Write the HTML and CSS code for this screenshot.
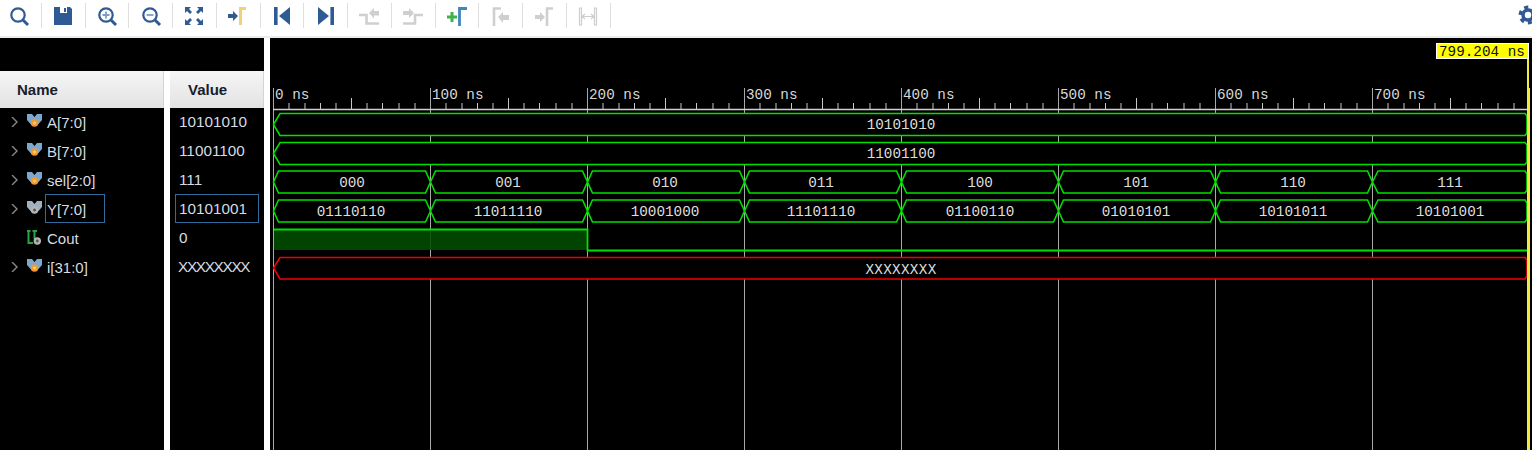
FILE: index.html
```html
<!DOCTYPE html>
<html lang="en">
<head>
<meta charset="utf-8">
<title>Waveform</title>
<link rel="stylesheet" href="styles.css">
</head>
<body>
<div class="app">
  <div class="toolbar">
    <div class="tool"><svg viewBox="0 0 24 24"><circle class="s-blue" cx="11" cy="11" r="6.700"/><path class="s-blue thick" d="M16 16l5 5"/></svg></div>
    <div class="tool"><svg viewBox="0 0 24 24"><path class="f-blue" d="M3 3h16l2 2v16H3z"/><path class="f-white" d="M9 3h7v6H9z"/><path class="f-blue" d="M13 4h2v4h-2z"/></svg></div>
    <div class="tool"><svg viewBox="0 0 24 24"><circle class="s-blue" cx="11" cy="11" r="6.700"/><path class="s-blue thick" d="M16 16l5 5"/><path class="s-light" d="M7.500 11h7M11 7.500v7"/></svg></div>
    <div class="tool"><svg viewBox="0 0 24 24"><circle class="s-blue" cx="11" cy="11" r="6.700"/><path class="s-blue thick" d="M16 16l5 5"/><path class="s-light" d="M7.500 11h7"/></svg></div>
    <div class="tool"><svg viewBox="0 0 24 24"><path class="f-blue" d="M3 3h6l-2 2 3 3-2 2-3-3-2 2zM21 3v6l-2-2-3 3-2-2 3-3-2-2zM3 21v-6l2 2 3-3 2 2-3 3 2 2zM21 21h-6l2-2-3-3 2-2 3 3 2-2z"/></svg></div>
    <div class="tool"><svg viewBox="0 0 24 24"><path class="s-yellow" d="M14.500 21V4.500H20"/><path class="f-blue" d="M2 10h5V7l5 5-5 5v-3H2z"/></svg></div>
    <div class="tool"><svg viewBox="0 0 24 24"><path class="f-blue" d="M4 3h3.600v18H4zM20 3v18L9 12z"/></svg></div>
    <div class="tool"><svg viewBox="0 0 24 24"><path class="f-blue" d="M16.400 3H20v18h-3.600zM4 3v18l11-9z"/></svg></div>
    <div class="tool"><svg viewBox="0 0 24 24"><path class="s-gray" d="M2 11H9.500V19.500H22"/><path class="f-gray" d="M12 9l5-5v3h5v4.500h-5v3z"/></svg></div>
    <div class="tool"><svg viewBox="0 0 24 24"><path class="s-gray" d="M2 19.500H14V11H22"/><path class="f-gray" d="M2 7h6V4l5 5-5 5v-3H2z"/></svg></div>
    <div class="tool"><svg viewBox="0 0 24 24"><path class="s-steel" d="M14.500 22V4.500H22"/><path class="s-green" d="M2 13h10M7 8v10"/></svg></div>
    <div class="tool"><svg viewBox="0 0 24 24"><path class="s-gray" d="M5 22V4.500H12"/><path class="f-gray" d="M9 13l5-5v3h6v5h-6v3z"/></svg></div>
    <div class="tool"><svg viewBox="0 0 24 24"><path class="s-gray" d="M15 22V4.500H21"/><path class="f-gray" d="M3 11h5V8l5 5-5 5v-3H3z"/></svg></div>
    <div class="tool"><svg viewBox="0 0 24 24"><path class="s-thin" d="M3.500 4v17h2V4zM18.500 4v17h2V4zM6 12.500h12M9 10l-3 2.500 3 2.500M15 10l3 2.500-3 2.500"/></svg></div>
    <div class="gear"><svg viewBox="0 0 24 24"><circle class="gear-teeth" cx="12" cy="12" r="7.500"/><circle class="gear-body" cx="12" cy="12" r="5"/></svg></div>
  </div>
  <div class="main">
    <div class="left">
      <div class="band"></div>
      <div class="columns">
        <div class="col col-name">
          <div class="head">Name</div>
          <div class="row"><svg class="chev" viewBox="0 0 7 10"><path d="M1 0l5 5-5 5"/></svg><svg class="sig" viewBox="0 0 15 15"><path class="bus" d="M0 0h5l2.500 3 2.500-3h5v6l-3.500 4h-8L0 6z"/><circle class="dot" cx="7.500" cy="9" r="3.800"/><circle class="dot-core" cx="7.500" cy="9" r="1.500"/></svg><span class="name">A[7:0]</span></div>
          <div class="row"><svg class="chev" viewBox="0 0 7 10"><path d="M1 0l5 5-5 5"/></svg><svg class="sig" viewBox="0 0 15 15"><path class="bus" d="M0 0h5l2.500 3 2.500-3h5v6l-3.500 4h-8L0 6z"/><circle class="dot" cx="7.500" cy="9" r="3.800"/><circle class="dot-core" cx="7.500" cy="9" r="1.500"/></svg><span class="name">B[7:0]</span></div>
          <div class="row"><svg class="chev" viewBox="0 0 7 10"><path d="M1 0l5 5-5 5"/></svg><svg class="sig" viewBox="0 0 15 15"><path class="bus" d="M0 0h5l2.500 3 2.500-3h5v6l-3.500 4h-8L0 6z"/><circle class="dot" cx="7.500" cy="9" r="3.800"/><circle class="dot-core" cx="7.500" cy="9" r="1.500"/></svg><span class="name">sel[2:0]</span></div>
          <div class="row"><svg class="chev" viewBox="0 0 7 10"><path d="M1 0l5 5-5 5"/></svg><svg class="sig" viewBox="0 0 15 15"><path class="bus-out" d="M0 0h5l2.500 3 2.500-3h5v6l-3.500 4h-8L0 6z"/><circle class="dot-out" cx="7.500" cy="9" r="3.800"/><circle class="hole" cx="7.500" cy="9" r="1.500"/></svg><span class="name selected">Y[7:0]</span></div>
          <div class="row"><span class="chev-space"></span><svg class="sig" viewBox="0 0 15 15"><path class="bit" d="M1.500 0V13H6M0 1H3.500M7.500 0V9M5.500 1H10"/><circle class="dot-out" cx="10.300" cy="11" r="3.700"/><circle class="hole" cx="10.300" cy="11" r="1.400"/></svg><span class="name">Cout</span></div>
          <div class="row"><svg class="chev" viewBox="0 0 7 10"><path d="M1 0l5 5-5 5"/></svg><svg class="sig" viewBox="0 0 15 15"><path class="bus" d="M0 0h5l2.500 3 2.500-3h5v6l-3.500 4h-8L0 6z"/><circle class="dot" cx="7.500" cy="9" r="3.800"/><circle class="dot-core" cx="7.500" cy="9" r="1.500"/></svg><span class="name">i[31:0]</span></div>
        </div>
        <div class="col col-value">
          <div class="head">Value</div>
          <div class="row"><span class="value">10101010</span></div>
          <div class="row"><span class="value">11001100</span></div>
          <div class="row"><span class="value">111</span></div>
          <div class="row"><span class="value selected-value">10101001</span></div>
          <div class="row"><span class="value">0</span></div>
          <div class="row"><span class="value unknown">XXXXXXXX</span></div>
        </div>
      </div>
    </div>
    <div class="waves">
      <svg class="plot" viewBox="270 38 1262 412">
        <defs>
          <path id="ticks" d="M15.500 103v6M31.500 103v6M47 103v6M62.500 103v6M78 98v11M93.500 103v6M109 103v6M125.500 103v6M141.500 103v6"/>
          <path id="seg" d="M0 0L5-11H152L157 0L152 11H5Z"/>
        </defs>

        <path class="grid" d="M273.500 88V450M430.500 88V450M587.500 88V450M744.500 88V450M901.500 88V450M1058.500 88V450M1215.500 88V450M1372.500 88V450"/>
        <path class="ruler" d="M273 109.500H1528"/>
        <g class="tick">
          <use href="#ticks" x="273.500"/><use href="#ticks" x="430.500"/><use href="#ticks" x="587.500"/><use href="#ticks" x="744.500"/>
          <use href="#ticks" x="901.500"/><use href="#ticks" x="1058.500"/><use href="#ticks" x="1215.500"/><use href="#ticks" x="1372.500"/>
        </g>
        <g class="mono-label">
          <text x="275" y="99">0 ns</text><text x="432" y="99">100 ns</text><text x="589" y="99">200 ns</text><text x="746" y="99">300 ns</text>
          <text x="903" y="99">400 ns</text><text x="1060" y="99">500 ns</text><text x="1217" y="99">600 ns</text><text x="1374" y="99">700 ns</text>
        </g>

        <g class="wave">
          <path d="M273.500 124.500L280 113.500H1525L1527 116V133L1525 135.500H280Z"/>
          <path d="M273.500 153.500L280 142.500H1525L1527 145V162L1525 164.500H280Z"/>
          <use href="#seg" x="273.500" y="182"/><use href="#seg" x="430.500" y="182"/><use href="#seg" x="587.500" y="182"/><use href="#seg" x="744.500" y="182"/>
          <use href="#seg" x="901.500" y="182"/><use href="#seg" x="1058.500" y="182"/><use href="#seg" x="1215.500" y="182"/>
          <path d="M1372.500 182L1378 171H1525L1527 174V190L1525 193H1378Z"/>
          <use href="#seg" x="273.500" y="211"/><use href="#seg" x="430.500" y="211"/><use href="#seg" x="587.500" y="211"/><use href="#seg" x="744.500" y="211"/>
          <use href="#seg" x="901.500" y="211"/><use href="#seg" x="1058.500" y="211"/><use href="#seg" x="1215.500" y="211"/>
          <path d="M1372.500 211L1378 200H1525L1527 203V219L1525 222H1378Z"/>
        </g>
        <rect class="high" x="274" y="229" width="313.500" height="21"/>
        <path class="wave-line" d="M274 229.500H587.500V250.500H1528"/>
        <path class="wave-red" d="M273.500 268L280 257.500H1525L1527 260V276L1525 279H280Z"/>

        <g class="mono-value">
          <text x="901" y="129">10101010</text>
          <text x="901" y="158">11001100</text>
          <text x="352" y="187">000</text><text x="508" y="187">001</text><text x="665" y="187">010</text><text x="821" y="187">011</text>
          <text x="980" y="187">100</text><text x="1136" y="187">101</text><text x="1293" y="187">110</text><text x="1450" y="187">111</text>
          <text x="351" y="216">01110110</text><text x="508" y="216">11011110</text><text x="665" y="216">10001000</text><text x="821" y="216">11101110</text>
          <text x="980" y="216">01100110</text><text x="1136" y="216">01010101</text><text x="1293" y="216">10101011</text><text x="1450" y="216">10101001</text>
          <text class="x-value" x="901" y="274">XXXXXXXX</text>
        </g>

        <path class="cursor" d="M1528 58V450"/>
        <path class="cursor-edge" d="M1529.500 88V450"/>
        <rect class="flag" x="1436.500" y="43.500" width="92" height="15"/>
        <text class="flag-text" x="1439" y="56">799.204 ns</text>
      </svg>
    </div>
  </div>
</div>
</body>
</html>
```

FILE: styles.css
```css
* { box-sizing: border-box; }
html, body { margin: 0; padding: 0; background: #fff; }
body { width: 1532px; height: 450px; overflow: hidden; font-family: "Liberation Sans", Arial, sans-serif; }

.app { display: flex; flex-direction: column; width: 1532px; height: 450px; }

.toolbar {
  display: flex;
  flex: 0 0 38px;
  align-items: flex-start;
  padding-top: 3px;
  background: #fff;
  border-bottom: 2px solid #ececec;
  overflow: hidden;
}
.tool {
  flex: 0 0 43.750px;
  height: 25px;
  display: flex;
  justify-content: center;
  align-items: center;
  border-right: 1px solid #dedede;
}
.tool:first-child { margin-left: -2px; }
.tool svg { width: 24px; height: 24px; }
.gear { margin-left: auto; margin-right: -8px; height: 24px; }
.gear svg { width: 24px; height: 24px; }

.s-blue, .s-light, .s-yellow, .s-gray, .s-steel, .s-green, .s-thin { fill: none; }
.s-blue { stroke: #2f5a94; stroke-width: 2.200; }
.s-blue.thick { stroke-width: 3; }
.s-light { stroke: #7f9dc4; stroke-width: 1.800; }
.s-yellow { stroke: #f1d27a; stroke-width: 3; }
.s-gray { stroke: #cfcfcf; stroke-width: 2.600; }
.s-steel { stroke: #3f86bd; stroke-width: 2.800; }
.s-green { stroke: #3fb24c; stroke-width: 3; }
.s-thin { stroke: #cdcdcd; stroke-width: 1.200; }
.f-blue { fill: #2f5a94; }
.f-white { fill: #fff; }
.f-gray { fill: #cfcfcf; }
.gear-teeth { fill: none; stroke: #2f5a94; stroke-width: 4; stroke-dasharray: 4 3.850; }
.gear-body { fill: none; stroke: #2f5a94; stroke-width: 3.500; }

.main { display: flex; flex: 1; min-height: 0; }
.left { flex: 0 0 264px; display: flex; flex-direction: column; }
.band { flex: 0 0 33px; background: #000; }
.columns { flex: 1; display: flex; gap: 6px; background: #fff; }
.col { background: #000; color: #d6dce2; font-size: 15px; }
.col-name { flex: 0 0 164px; }
.col-value { flex: 0 0 94px; }

.head {
  height: 37px;
  display: flex;
  align-items: center;
  font-weight: bold;
  color: #16202c;
  background: linear-gradient(#f6f6f6, #e2e2e2);
  border-right: 1px solid #d4d4d4;
  margin-bottom: -1px;
}
.col-name .head { padding-left: 17px; }
.col-value .head { padding-left: 18px; }

.row { display: flex; align-items: center; height: 29px; padding-left: 11px; }
.col-value .row { padding-left: 9px; }
.name, .value { margin-top: 1px; }
.value { font-size: 15.300px; }
.unknown { margin-left: -1px; letter-spacing: -1.300px; }
.chev { flex: 0 0 7px; width: 7px; height: 10px; margin-right: 9px; }
.chev path { fill: none; stroke: #8a8a8a; stroke-width: 1.400; }
.chev-space { flex: 0 0 16px; }
.sig { flex: 0 0 15px; width: 15px; height: 15px; margin-right: 5px; margin-top: -1px; }
.bus { fill: #7ba8cc; }
.dot { fill: #f09a30; }
.dot-core { fill: #ffc878; }
.bus-out { fill: #9fb0bf; }
.dot-out { fill: #b5b5b5; }
.hole { fill: #555; }
.bit { fill: none; stroke: #22a842; stroke-width: 2; }

.selected, .selected-value {
  display: flex;
  align-items: center;
  height: 29px;
  margin-top: 0;
  padding-top: 1px;
  border: 1px solid #2f6c9c;
}
.selected { width: 60px; margin-left: -2px; padding-left: 1px; }
.selected-value { width: 84px; margin-left: -4px; padding-left: 3px; }

.waves { flex: 1; margin-left: 6px; background: #000; min-width: 0; }
.plot { display: block; width: 1262px; height: 412px; }

.grid { fill: none; stroke: #a8a8a8; stroke-width: 1; }
.ruler { fill: none; stroke: #cfcfcf; stroke-width: 1.400; }
.tick { fill: none; stroke: #c8c8c8; stroke-width: 1; }
.mono-label text, .mono-value text, .flag-text { font-family: "Liberation Mono", "Courier New", monospace; font-size: 14.300px; }
.mono-label text { fill: #d8d8d8; }
.mono-value text { fill: #dedede; text-anchor: middle; }
.mono-value .x-value { letter-spacing: .300px; }
.wave { fill: #000; stroke: #00e000; stroke-width: 1.600; }
.wave-line { fill: none; stroke: #00e000; stroke-width: 1.800; }
.wave-red { fill: #000; stroke: #f00000; stroke-width: 1.600; }
.high { fill: #004d00; fill-opacity: .88; }
.cursor { fill: none; stroke: #f4ea3c; stroke-width: 2; }
.cursor-edge { fill: none; stroke: #d9e0a0; stroke-width: 1; }
.flag { fill: #ffff00; stroke: #fff; stroke-width: 1; }
.flag-text { fill: #111; }
```
